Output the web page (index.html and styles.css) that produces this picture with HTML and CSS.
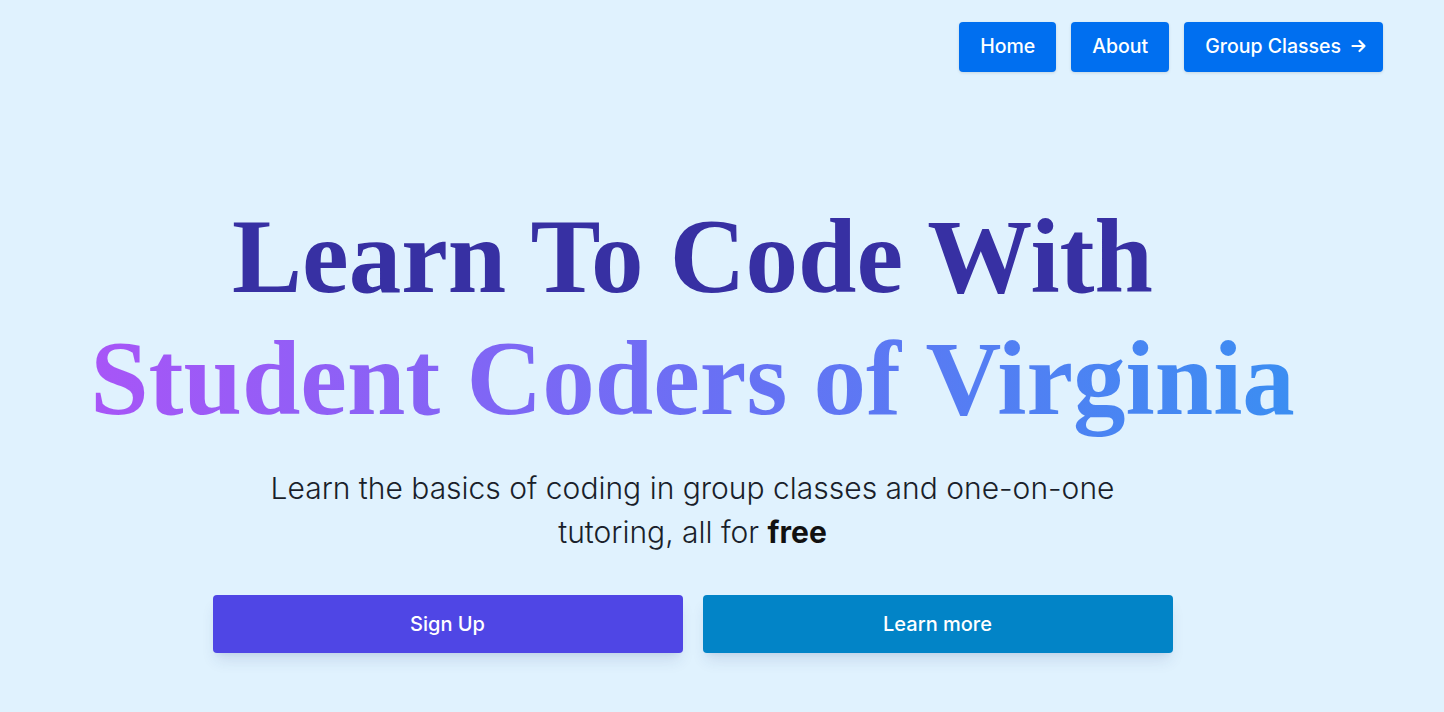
FILE: index.html
```html
<!DOCTYPE html>
<html lang="en">
<head>
<meta charset="utf-8">
<title>Student Coders of Virginia</title>
<link rel="stylesheet" href="styles.css">
</head>
<body>
<div class="page">
  <nav class="nav">
    <a class="nav-btn" href="#">Home</a>
    <a class="nav-btn" href="#">About</a>
    <a class="nav-btn nav-btn-arrow" href="#">Group Classes
      <svg class="arrow" width="16" height="16" viewBox="0 0 16 16" fill="none" stroke="currentColor" stroke-width="2.2" stroke-linecap="round" stroke-linejoin="round"><path d="M1.5 8h12M8.5 3l5 5-5 5"/></svg>
    </a>
  </nav>
  <main class="hero">
    <h1 class="title">
      <span class="line1">Learn To Code With</span>
      <span class="line2">Student Coders of Virginia</span>
    </h1>
    <p class="lead">Learn the basics of coding in group classes and one-on-one tutoring, all for <strong>free</strong></p>
    <div class="actions">
      <a class="cta cta-primary" href="#">Sign Up</a>
      <a class="cta cta-secondary" href="#">Learn more</a>
    </div>
  </main>
</div>
</body>
</html>
```
FILE: styles.css
```css
* { box-sizing: border-box; }
html, body { margin: 0; padding: 0; }
body {
  background: #e0f2fe;
  font-family: Inter, "Noto Sans", sans-serif;
  color: #1f2937;
  height: 712px;
  overflow: hidden;
}
.page {
  padding-right: 61px;
}
.nav {
  display: flex;
  justify-content: flex-end;
  gap: 15px;
  padding-top: 22px;
}
.nav-btn {
  display: flex;
  align-items: center;
  gap: 10px;
  height: 50px;
  padding: 0 21px 2px;
  background: #006ff0;
  color: #fff;
  text-decoration: none;
  font-size: 19.5px;
  font-weight: 500;
  border-radius: 4px;
  box-shadow: 0 1px 3px rgba(0,0,0,0.12);
}
.nav-btn-arrow { padding-right: 16px; }
.arrow { display: block; }
.hero {
  display: flex;
  flex-direction: column;
  align-items: center;
  text-align: center;
  margin-top: 124px;
  padding-left: 2px;
}
.title {
  margin: 0;
  font-family: "Liberation Serif", "Times New Roman", serif;
  font-weight: 700;
  font-size: 105px;
  line-height: 122px;
}
.line1 { display: block; color: #3730a3; }
.line2 {
  display: inline-block;
  background: linear-gradient(to right, #a855f7, #6b6ff4 50%, #3b8ef2);
  -webkit-background-clip: text;
  background-clip: text;
  color: transparent;
  padding-bottom: 8px;
}
.lead {
  margin: 18px 0 0;
  max-width: 900px;
  font-size: 30px;
  font-weight: 300;
  line-height: 44px;
  color: #1a1f2b;
}
.lead strong { font-weight: 700; color: #111; }
.actions {
  display: flex;
  gap: 20px;
  margin-top: 41px;
}
.cta {
  display: flex;
  align-items: center;
  justify-content: center;
  width: 470px;
  height: 58px;
  border-radius: 4px;
  color: #fff;
  text-decoration: none;
  font-size: 20px;
  font-weight: 500;
  box-shadow: 0 10px 15px -3px rgba(30,60,120,0.12), 0 4px 6px -4px rgba(30,60,120,0.1);
}
.cta-primary { background: #4f46e5; }
.cta-secondary { background: #0284c7; }
```
